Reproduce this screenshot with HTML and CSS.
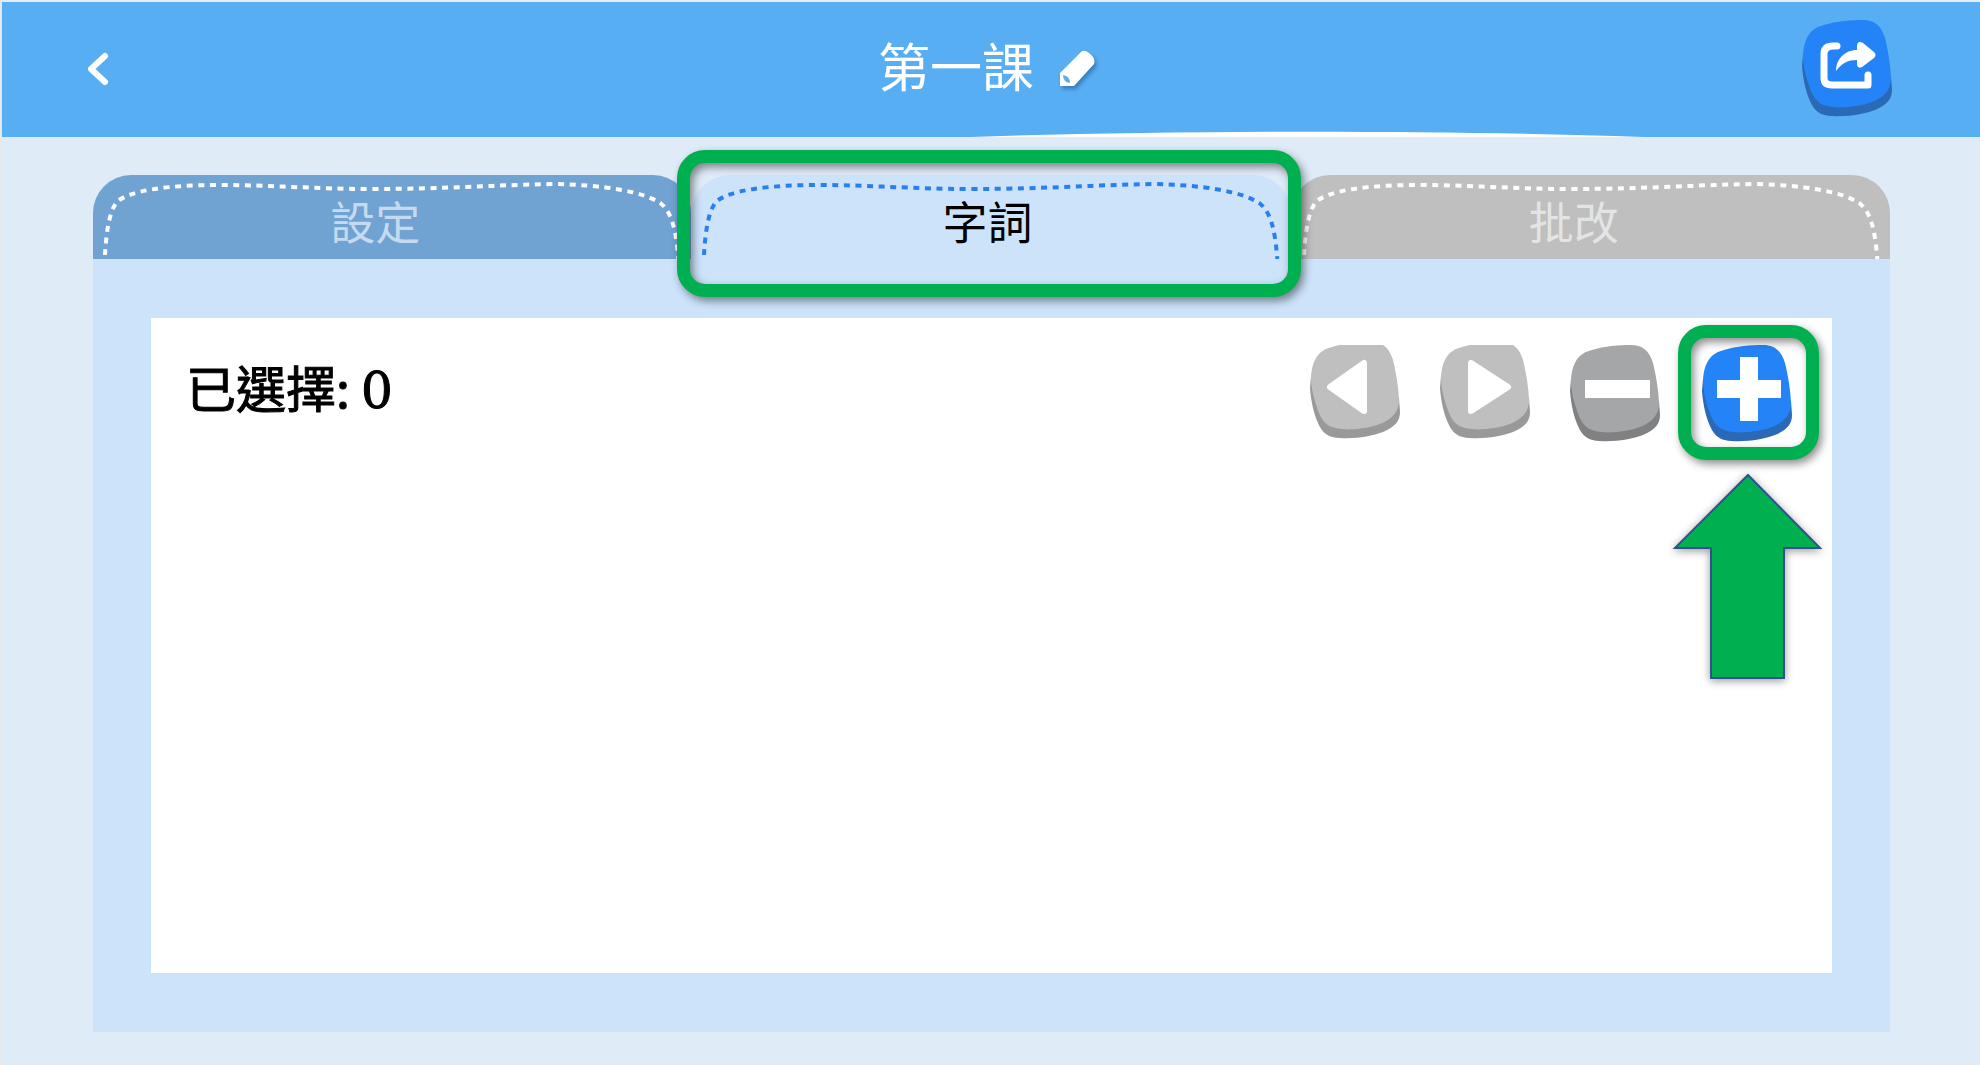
FILE: index.html
```
<!DOCTYPE html>
<html lang="zh-Hant">
<head>
    <meta charset="UTF-8">
    <meta name="viewport" content="width=device-width, initial-scale=1.0">
    <title>第一課</title>
    <link rel="stylesheet" href="styles.css">
</head>
<body>
    <!-- shared button shapes -->
    <svg class="defs" aria-hidden="true">
        <symbol id="key" viewBox="0 0 92 98">
            <path class="key-side" d="M1 34 L0 46 C1 60 4 72 8 81 C12 91 19 96 30 96 C46 97 62 94 73 90 C85 85 90 79 90 70 L89 56 Z"/>
            <path class="key-face" d="M1 36 C2 17 9 8 22 5 C34 1 50 0 61 0 C72 0 79 5 83 18 C86 30 89 48 89 60 C88 73 78 80 64 84 C52 87 38 88 32 87 C19 86 13 81 9 71 C4 58 1 46 1 36 Z"/>
        </symbol>
        <symbol id="stitch" viewBox="0 0 598 84" preserveAspectRatio="none">
            <path d="M12 80 C13 60 16 36 24 27 C36 15 78 10 125 10 C180 10 220 14 280 14 C350 14 400 10 461 9 C510 10 548 16 567 28 C580 38 583 60 585 84"/>
        </symbol>
    </svg>

    <header class="header">
        <button type="button" class="icon-button back" aria-label="返回">
            <svg width="24" height="36" viewBox="0 0 24 36"><path d="M19 5 L5 18 L19 31"/></svg>
        </button>
        <div class="title">
            <h1>第一課</h1>
            <button type="button" class="icon-button edit" aria-label="編輯">
                <svg width="40" height="40" viewBox="0 0 40 40">
                    <path fill="#fff" d="M2 24 L23 3 Q26 0 31 4 Q38 9 36 15 L16 37 H2 Z"/>
                    <path fill="#58aef2" d="M5 26 Q12 27 12 34 Q5 33 5 26 Z"/>
                </svg>
            </button>
        </div>
        <button type="button" class="icon-button key key-blue" aria-label="分享">
            <svg width="92" height="98" viewBox="0 0 92 98">
                <use href="#key"/>
                <path fill="none" stroke="#fff" stroke-width="7" stroke-linecap="round" stroke-linejoin="round" d="M35 26 H31 Q22 26 22 34 V58 Q22 65 30 65 H66 V55"/>
                <path fill="#fff" d="M34 51 C34 39 43 30 55 30 V25 Q56 20 61 23 L72 32 Q75 35 72 38 L60 47 Q56 49 55 45 V40 C46 40 40 43 34 51 Z"/>
            </svg>
        </button>
        <svg class="header-curve" viewBox="0 0 650 6" preserveAspectRatio="none"><path fill="#fff" d="M0 6 C200 -1 450 -1 650 6 Z"/></svg>
    </header>

    <main>
        <nav class="tabs">
            <button type="button" class="tab tab-settings"><svg class="stitch"><use href="#stitch"/></svg>設定</button>
            <button type="button" class="tab tab-active"><svg class="stitch"><use href="#stitch"/></svg>字詞</button>
            <button type="button" class="tab tab-marking"><svg class="stitch"><use href="#stitch"/></svg>批改</button>
        </nav>
        <section class="panel">
            <div class="sheet">
                <p class="selected">已選擇: <span class="count">0</span></p>
                <div class="tools">
                    <button type="button" class="icon-button key key-light" aria-label="上一頁">
                        <svg width="92" height="94" viewBox="0 3 92 94">
                            <use href="#key" width="92" height="98"/>
                            <path fill="#fff" stroke="#fff" stroke-width="6" stroke-linejoin="round" d="M20 45 L54 21 V69 Z"/>
                        </svg>
                    </button>
                    <button type="button" class="icon-button key key-light" aria-label="下一頁">
                        <svg width="92" height="94" viewBox="0 3 92 94">
                            <use href="#key" width="92" height="98"/>
                            <path fill="#fff" stroke="#fff" stroke-width="6" stroke-linejoin="round" d="M68 45 L31 21 V69 Z"/>
                        </svg>
                    </button>
                    <button type="button" class="icon-button key key-gray" aria-label="刪除">
                        <svg width="92" height="98" viewBox="0 0 92 98">
                            <use href="#key"/>
                            <path fill="#fff" d="M15 35 H80 V53 H15 Z"/>
                        </svg>
                    </button>
                    <div class="add">
                        <button type="button" class="icon-button key key-blue" aria-label="新增">
                            <svg width="92" height="98" viewBox="0 0 92 98">
                                <use href="#key"/>
                                <path fill="#fff" d="M38 12 H56 V35 H79 V53 H56 V76 H38 V53 H15 V35 H38 Z"/>
                            </svg>
                        </button>
                        <svg class="arrow" width="152" height="208" viewBox="0 0 152 208">
                            <path d="M76 2 L148 75 H112 V205 H39 V75 H3 Z"/>
                        </svg>
                    </div>
                </div>
            </div>
        </section>
    </main>
</body>
</html>
```
FILE: styles.css
```
* {
    box-sizing: border-box;
}
body {
    margin: 0;
    min-height: 100vh;
    display: flex;
    flex-direction: column;
    border-top: 2px solid #e8edf2;
    border-left: 2px solid #e6e8ea;
    background: #dfebf7;
    color: #000;
    font-family: "Noto Sans CJK TC", sans-serif;
}
.defs {
    position: absolute;
    width: 0;
    height: 0;
}
.icon-button {
    display: block;
    padding: 0;
    border: none;
    background: none;
    cursor: pointer;
}
.icon-button svg {
    display: block;
}

/* header */
.header {
    position: relative;
    display: grid;
    grid-template-columns: 1fr auto 1fr;
    align-items: center;
    height: 135px;
    padding: 0 86px 2px 84px;
    background: #58aef2;
}
.back {
    justify-self: start;
}
.back path {
    fill: none;
    stroke: #fff;
    stroke-width: 6;
    stroke-linecap: round;
    stroke-linejoin: round;
}
.title {
    display: flex;
    align-items: center;
    gap: 24px;
    margin-right: 4px;
}
.title h1 {
    margin: 0;
    padding-bottom: 8px;
    color: #fff;
    font-size: 52px;
    font-weight: 400;
    line-height: 64px;
}
.edit svg {
    filter: drop-shadow(2px 3px 2px rgba(0, 50, 100, 0.4));
}
.header > .key {
    justify-self: end;
}
.header-curve {
    position: absolute;
    left: 49%;
    bottom: 0;
    width: 34%;
    height: 6px;
}

/* raised buttons */
.key-blue {
    --face: #2484f7;
    --side: #2a69b5;
}
.key-light {
    --face: #bfbfbf;
    --side: #999;
}
.key-gray {
    --face: #a5a6a8;
    --side: #808183;
}
.key-face {
    fill: var(--face);
}
.key-side {
    fill: var(--side);
}

/* tabs */
main {
    flex: 1;
    display: flex;
    flex-direction: column;
    padding: 38px 90px 33px 91px;
}
.tabs {
    display: grid;
    grid-template-columns: repeat(3, 1fr);
    gap: 1px;
}
.tab {
    position: relative;
    height: 84px;
    padding: 8px 34px 0 0;
    border: none;
    border-radius: 38px 38px 0 0;
    font-family: inherit;
    font-size: 45px;
    line-height: 60px;
    cursor: pointer;
}
.tab-settings {
    background: #70a2d2;
    color: #c5daee;
}
.tab-marking {
    background: #bfbfbf;
    color: #e4e4e4;
}
.tab-active {
    z-index: 1;
    padding-right: 8px;
    background: #cde3fa;
    color: #000;
}
.stitch {
    position: absolute;
    inset: 0;
    width: 100%;
    height: 100%;
    fill: none;
    stroke: #fff;
    stroke-width: 4;
    stroke-dasharray: 6 5.6;
}
.tab-active .stitch {
    stroke: #2a7ff0;
}

/* highlight frames */
.tab-active::after,
.add::after {
    content: "";
    position: absolute;
    border: 13px solid #00b050;
    border-radius: 28px;
    filter: drop-shadow(3px 4px 4px rgba(0, 0, 0, 0.45));
    pointer-events: none;
}
.tab-active::after {
    inset: -25px -10px -38px -15px;
}
.add::after {
    inset: -20px -25px -17px -24px;
}

/* content */
.panel {
    flex: 1;
    display: flex;
    padding: 59px 58px;
    background: #cde3fa;
}
.sheet {
    flex: 1;
    display: flex;
    justify-content: space-between;
    align-items: flex-start;
    padding: 27px 38px 27px 35px;
    background: #fff;
}
.selected {
    margin: 5px 0 0;
    font-size: 50px;
    font-weight: 400;
    line-height: 72px;
    -webkit-text-stroke: 1px #000;
}
.count {
    font-family: "DejaVu Serif", serif;
}
.tools {
    display: flex;
    align-items: flex-start;
    gap: 38px;
}
.add {
    position: relative;
    margin-left: 2px;
}
.arrow {
    position: absolute;
    top: 128px;
    left: -30px;
    overflow: visible;
    fill: #00b050;
    stroke: #2f528f;
    stroke-width: 2;
    filter: drop-shadow(0 2px 4px rgba(0, 0, 0, 0.4));
}
```
